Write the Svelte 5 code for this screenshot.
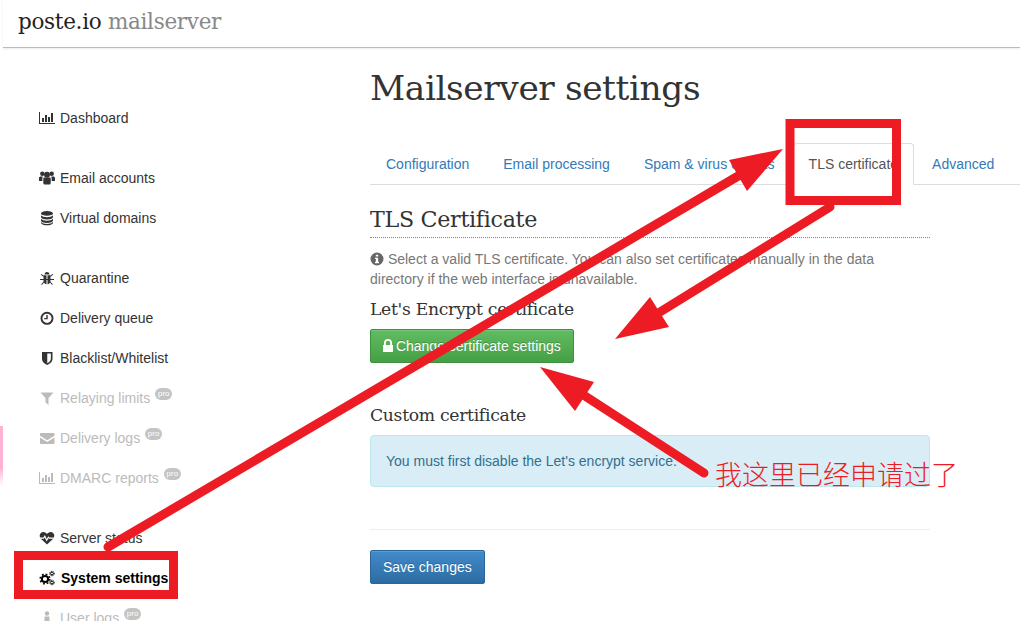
<script>
	const groups = [
		[{ label: 'Dashboard', icon: 'chart' }],
		[
			{ label: 'Email accounts', icon: 'users' },
			{ label: 'Virtual domains', icon: 'db' }
		],
		[
			{ label: 'Quarantine', icon: 'bug' },
			{ label: 'Delivery queue', icon: 'clock' },
			{ label: 'Blacklist/Whitelist', icon: 'shield' },
			{ label: 'Relaying limits', icon: 'filter', pro: true },
			{ label: 'Delivery logs', icon: 'mail', pro: true },
			{ label: 'DMARC reports', icon: 'chart', pro: true }
		],
		[
			{ label: 'Server status', icon: 'heart' },
			{ label: 'System settings', icon: 'cogs', active: true },
			{ label: 'User logs', icon: 'user', pro: true }
		]
	];

	const tabs = ['Configuration', 'Email processing', 'Spam & virus checks', 'TLS certificate', 'Advanced'];
</script>

{#snippet icon(name)}
	<svg class="icon" viewBox="0 0 16 16" aria-hidden="true">
		{#if name === 'chart'}
			<path d="M0 2h1v11h15v1H0z" />
			<path d="M3 8h2v4H3zM6 5h2v7H6zM9 7h2v5H9zM12 3h2v9h-2z" />
		{:else if name === 'users'}
			<circle cx="3.300" cy="3.800" r="2.200" />
			<circle cx="12.700" cy="3.800" r="2.200" />
			<circle cx="8" cy="4.800" r="3" />
			<path d="M0 11V8C0 7 .8 6.500 1.800 6.500h2c-.5 1.200-.6 2.500-.4 4.500zM16 11V8C16 7 15.200 6.500 14.200 6.500h-2c.5 1.200.6 2.500.4 4.500zM4.300 8.500c0-.6.5-1 1-1h5.400c.6 0 1 .4 1 1V13c0 .8-.5 1.500-1.500 1.500h-4.400c-1 0-1.500-.7-1.500-1.500z" />
		{:else if name === 'db'}
			<ellipse cx="8" cy="3.400" rx="6" ry="2.400" />
			<path d="M2 5.300c1 1.300 3.200 2 6 2s5-.7 6-2v2c-.6 1.400-3 2.200-6 2.200S2.600 8.700 2 7.300zM2 8.800c1 1.300 3.200 2 6 2s5-.7 6-2v2c-.6 1.400-3 2.200-6 2.200s-5.400-.8-6-2.200zM2 12.100c1 1.300 3.200 2 6 2s5-.7 6-2v.9c-.6 1.400-3 2.300-6 2.300s-5.400-.9-6-2.300z" />
		{:else if name === 'bug'}
			<path d="M5.500 4.500C5.700 2.800 6.700 2 8 2s2.300.8 2.500 2.500zM4.500 5.300h3v9C6 14 4.500 12.800 4.500 10.500zM8.500 5.300h3v5.200c0 2.300-1.500 3.500-3 3.800z" />
			<path d="M1 9h14v1H1zM2.500 4l2.500 2-.6.7-2.600-2zM13.500 4 11 6l.6.7 2.600-2zM2.200 14.300l2.500-2.800.7.6-2.500 2.900zM13.800 14.300l-2.500-2.800-.7.6 2.500 2.900z" />
		{:else if name === 'clock'}
			<path fill-rule="evenodd" d="M8 1.800a6.500 6.500 0 1 1 0 13 6.500 6.500 0 0 1 0-13zm0 1.900a4.600 4.600 0 1 0 0 9.200 4.600 4.600 0 0 0 0-9.200z" />
			<path d="M7.300 5h1.400v4.200H5.200V8h2.100z" />
		{:else if name === 'shield'}
			<path fill-rule="evenodd" d="M3 2h10.500v7c0 3-3 5-5.250 6C6 14 3 12 3 9zm5.250 1.500v9.700c1.800-.9 3.600-2.400 3.600-4.200V3.500z" />
		{:else if name === 'filter'}
			<path d="M1.500 2.500h13L9.500 8v7l-3-2.500V8z" />
		{:else if name === 'mail'}
			<path d="M1 5.800V4c0-.6.4-1 1-1h12.500c.6 0 1 .4 1 1v1.800L8.200 10.300z" />
			<path d="M1 7.500 8.200 12l7.300-4.500V13c0 .6-.4 1-1 1H2c-.6 0-1-.4-1-1z" />
		{:else if name === 'heart'}
			<path d="M8 14.500 1.800 8.700C-.5 6 1 2 4.400 2 6 2 7.300 3 8 4c.7-1 2-2 3.600-2C15 2 16.500 6 14.200 8.700z" />
			<path class="cut" d="M1 8.200h3.600l1.200-2 1.900 4 1.700-3 .9 1h4.700" />
		{:else if name === 'cogs'}
			<circle class="ring" cx="6" cy="9" r="3.100" stroke-width="2" />
			<circle class="ring" cx="6" cy="9" r="4.800" stroke-width="1.600" stroke-dasharray="1.800 1.970" />
			<circle class="ring" cx="13" cy="3.500" r="1.400" stroke-width="1" />
			<circle class="ring" cx="13" cy="3.500" r="2.300" stroke-width="1" stroke-dasharray="1 .8" />
			<circle class="ring" cx="13" cy="12.500" r="1.400" stroke-width="1" />
			<circle class="ring" cx="13" cy="12.500" r="2.300" stroke-width="1" stroke-dasharray="1 .8" />
		{:else if name === 'user'}
			<circle cx="8" cy="3.500" r="2.200" />
			<path d="M5.500 6.500h5v5H9.500V16h-3v-4.500h-1z" />
		{/if}
	</svg>
{/snippet}

<div class="page">
	<header class="topbar">
		<span class="brand">poste.io <span class="brand-sub">mailserver</span></span>
	</header>

	<div class="body">
		<nav class="sidebar">
			{#each groups as group}
				<ul>
					{#each group as item}
						<li class:muted={item.pro} class:active={item.active}>
							{@render icon(item.icon)}
							<span>{item.label}</span>
							{#if item.pro}<sup class="pro">pro</sup>{/if}
						</li>
					{/each}
				</ul>
			{/each}
		</nav>

		<main class="content">
			<h1>Mailserver settings</h1>

			<ul class="tabs">
				{#each tabs as tab}
					<li class:current={tab === 'TLS certificate'}>{tab}</li>
				{/each}
			</ul>

			<div class="panel">
				<h2>TLS Certificate</h2>
				<p class="hint">
					<svg class="info" viewBox="0 0 14 14" aria-hidden="true">
						<path fill-rule="evenodd" d="M7 .5a6.500 6.500 0 1 1 0 13 6.500 6.500 0 0 1 0-13zM5.800 2.700v1.900h2.400V2.700zM5 5.700v1.300h.9v2.800H5v1.400h4V9.800h-.9V5.700z" />
					</svg>
					Select a valid TLS certificate. You can also set certificates manually in the data directory if the web interface is unavailable.
				</p>

				<h3>Let's Encrypt certificate</h3>
				<button class="btn green" type="button">
					<svg class="lock" viewBox="1 0 10 13" aria-hidden="true">
						<path fill-rule="evenodd" d="M2 6V4a4 4 0 0 1 8 0v2h1v7H1V6zm1.800 0h4.400V4a2.200 2.200 0 0 0-4.400 0z" />
					</svg>
					Change certificate settings
				</button>

				<h3 class="custom">Custom certificate</h3>
				<div class="alert">You must first disable the Let's encrypt service.</div>

				<hr />

				<button class="btn blue" type="button">Save changes</button>
			</div>
		</main>
	</div>

	<div class="sliver"></div>

	<!-- annotations dessinées par-dessus la capture -->
	<svg class="marks" viewBox="0 0 1020 621" aria-hidden="true">
		<rect x="790" y="123.500" width="106.500" height="77" class="box" />
		<rect x="18.500" y="555.500" width="155" height="39" class="box" />
		<line x1="108" y1="547" x2="745" y2="172" class="shaft" />
		<polygon points="783,149 729,160 747,191" />
		<line x1="830" y1="207" x2="660" y2="312" class="shaft" />
		<polygon points="615,339 650,297 669,327" />
		<line x1="704" y1="473" x2="585" y2="396" class="shaft" />
		<polygon points="540,367 594,382 575,411" />
	</svg>
	<span class="note">我这里已经申请过了</span>
</div>

<style>
	:global(html),
	:global(body) {
		margin: 0;
		overflow: hidden;
		background: #fff;
	}

	.page {
		position: relative;
		width: 1020px;
		height: 621px;
		overflow: hidden;
		font-family: 'Liberation Sans', Arial, sans-serif;
		font-size: 14px;
		line-height: 20px;
		color: #333;
	}

	.topbar {
		height: 48px;
		margin-left: 3px;
		box-sizing: border-box;
		padding: 0 0 3px 15px;
		border-bottom: 1px solid #bbb;
		box-shadow: 0 1px 2px rgba(0, 0, 0, 0.08);
		display: flex;
		align-items: center;
	}

	.brand {
		font-family: 'DejaVu Serif', serif;
		font-size: 21.500px;
		letter-spacing: -0.3px;
		color: #222;
	}

	.brand-sub {
		color: #888;
	}

	.body {
		display: flex;
	}

	.sidebar {
		width: 370px;
		flex: none;
		box-sizing: border-box;
		padding: 50px 0 0 39px;
		display: flex;
		flex-direction: column;
		gap: 20px;
	}

	.sidebar ul {
		list-style: none;
		margin: 0;
		padding: 0;
	}

	.sidebar li {
		height: 40px;
		display: flex;
		align-items: center;
		gap: 5px;
		color: #333;
	}

	.icon {
		width: 16px;
		height: 16px;
		flex: none;
		fill: #333;
	}

	.icon .cut {
		fill: none;
		stroke: #fff;
		stroke-width: 1.200;
	}

	.icon .ring {
		fill: none;
		stroke: #000;
	}

	.sidebar li.muted {
		color: #bbb;
	}

	.sidebar li.muted .icon {
		fill: #bbb;
	}

	.sidebar li.active {
		font-weight: bold;
		color: #000;
		gap: 6px;
	}

	.pro {
		align-self: flex-start;
		margin: 10px 0 0;
		width: 17px;
		height: 12px;
		border-radius: 6px;
		background: #c4c4c4;
		color: #fff;
		font-size: 8px;
		line-height: 11px;
		text-align: center;
	}

	.content {
		width: 650px;
		flex: none;
	}

	h1 {
		margin: 21px 0 36px;
		font-family: 'DejaVu Serif', serif;
		font-weight: 400;
		font-size: 34.400px;
		line-height: 38px;
		color: #333;
		letter-spacing: -0.4px;
	}

	.tabs {
		list-style: none;
		margin: 0;
		padding: 0;
		display: flex;
		border-bottom: 1px solid #ddd;
		height: 41px;
	}

	.tabs li {
		box-sizing: border-box;
		height: 42px;
		padding: 10px 15px;
		margin-right: 2px;
		border: 1px solid transparent;
		border-radius: 4px 4px 0 0;
		color: #337ab7;
		white-space: nowrap;
	}

	.tabs li.current {
		color: #555;
		background: #fff;
		border-color: #ddd #ddd #fff;
	}

	.panel {
		width: 560px;
	}

	h2 {
		margin: 20px 0 11px;
		padding-bottom: 4px;
		border-bottom: 1px dotted #888;
		font-family: 'DejaVu Serif', serif;
		font-weight: 400;
		font-size: 22.200px;
		line-height: 28px;
		letter-spacing: -0.3px;
	}

	.hint {
		margin: 0 0 9px;
		color: #777;
	}

	.info {
		width: 14px;
		height: 14px;
		fill: #666;
		vertical-align: -2px;
	}

	h3 {
		margin: 0 0 9px;
		font-family: 'DejaVu Serif', serif;
		font-weight: 400;
		font-size: 17.200px;
		line-height: 22px;
		letter-spacing: -0.3px;
	}

	h3.custom {
		margin: 41px 0 9px;
	}

	.btn {
		display: block;
		box-sizing: border-box;
		height: 34px;
		padding: 6px 12px;
		font: inherit;
		color: #fff;
		text-align: left;
		white-space: nowrap;
		text-shadow: 0 -1px 0 rgba(0, 0, 0, 0.2);
		border-radius: 2px;
		box-shadow: inset 0 1px 0 rgba(255, 255, 255, 0.15);
	}

	.green {
		width: 204px;
		background: linear-gradient(#62bc62, #45a045);
		border: 1px solid #3e8f3e;
	}

	.lock {
		width: 10px;
		height: 13px;
		margin-right: -1px;
		fill: #fff;
		vertical-align: -1px;
	}

	.blue {
		width: 115px;
		background: linear-gradient(#428bca, #2d6ca2);
		border: 1px solid #2b669a;
	}

	.alert {
		box-sizing: border-box;
		height: 52px;
		padding: 15px;
		border: 1px solid #bce8f1;
		border-radius: 4px;
		background: #d9edf7;
		color: #31708f;
	}

	hr {
		margin: 42px 0 20px;
		border: 0;
		border-top: 1px solid #eee;
	}

	.sliver {
		position: absolute;
		left: 0;
		top: 426px;
		width: 3px;
		height: 60px;
		background: linear-gradient(#ffb3d4 0, #ffb3d4 70%, #fff 100%);
	}

	.marks {
		position: absolute;
		inset: 0;
		width: 1020px;
		height: 621px;
		fill: #ed1c24;
	}

	.box {
		fill: none;
		stroke: #ed1c24;
		stroke-width: 9;
	}

	.shaft {
		stroke: #ed1c24;
		stroke-width: 9;
		stroke-linecap: round;
	}

	.note {
		position: absolute;
		left: 715px;
		top: 458px;
		font-family: 'Noto Sans CJK SC', sans-serif;
		font-size: 27px;
		line-height: 32px;
		font-weight: 300;
		color: #ed1c24;
		white-space: nowrap;
	}
</style>
